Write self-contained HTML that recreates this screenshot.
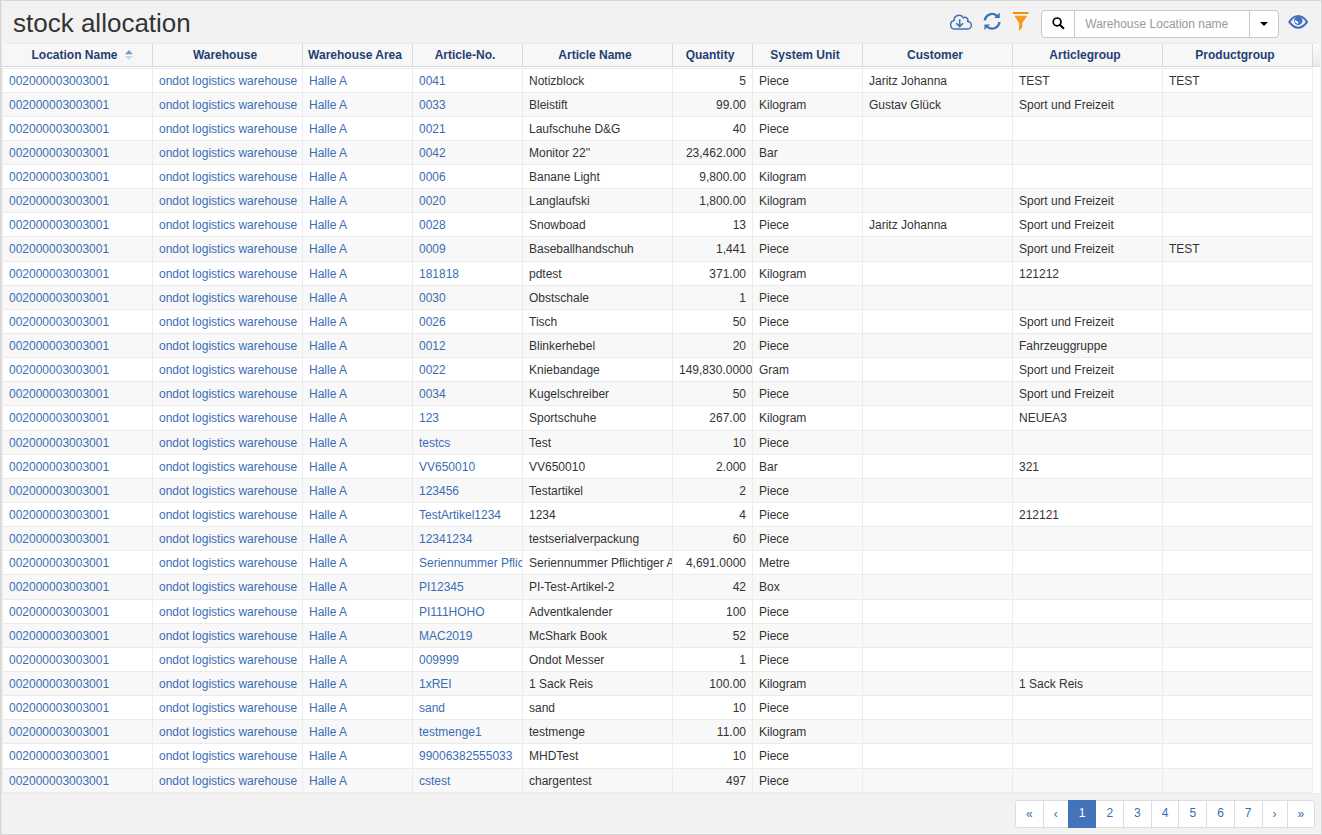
<!DOCTYPE html>
<html><head><meta charset="utf-8"><title>stock allocation</title>
<style>
*{box-sizing:border-box}
html,body{margin:0;padding:0}
body{width:1322px;height:835px;overflow:hidden;background:#f2f2f2;font-family:"Liberation Sans",sans-serif;font-size:12px;color:#333;position:relative}
.frame{position:absolute;left:0;top:0;width:1322px;height:835px;border:1px solid #d6d6d6;box-shadow:inset 1px 0 0 #e6e6e6,inset 0 1px 0 #f5f5f5,inset -1px 0 0 #f5f5f5,inset 0 -1px 0 #f5f5f5;pointer-events:none;z-index:5}
.title{position:absolute;left:13px;top:8px;font-size:26px;line-height:30px;color:#333;margin:0;font-weight:normal;white-space:nowrap}
.ico{position:absolute;display:block}
.ig{position:absolute;left:1041px;top:10px;width:238px;height:28px;border:1px solid #c9c9c9;border-radius:4px;background:#fff}
.ig .add{position:absolute;left:0;top:0;width:33px;height:26px;border-right:1px solid #c9c9c9}
.ig .ph{position:absolute;left:43.3px;top:5px;line-height:17px;color:#999;white-space:nowrap}
.ig .dd{position:absolute;left:207px;top:0;width:1px;height:26px;background:#c9c9c9}
.ig .caret{position:absolute;left:217.5px;top:11px;width:0;height:0;border-left:4px solid transparent;border-right:4px solid transparent;border-top:4px solid #000}
.thw{position:absolute;left:2px;top:43px;width:1319px;height:24px;background:#fff}
.thead{position:absolute;left:0;top:0;width:1319px;height:24px;background:#f7f7f7;border-top:1px solid #ebebeb;border-radius:5px 5px 0 0;overflow:hidden}
table{border-collapse:separate;border-spacing:0;table-layout:fixed}
th{font-weight:bold;color:#1f3f73;text-align:center;padding:3px 8px 2px 3px;line-height:17px;height:23px;border-right:1px solid #d6d9de;border-bottom:1px solid #d6d9de;white-space:nowrap;overflow:hidden;position:relative;background:#f7f7f7}
th.filler{border-right:0;background:linear-gradient(#fbfbfb,#e9e9e9);}
.sort{position:absolute;left:122.6px;top:6px;width:8px;height:10px}
.tbody{position:absolute;left:2px;top:67px;width:1319px;height:727px;background:#fff;border-bottom:1px solid #ededed}
.tbody table{position:absolute;left:0;top:1px}
td{padding:4px 6px 2px 6px;line-height:17px;height:24px;border-top:1px solid #ebebeb;border-left:1px solid #ececec;white-space:nowrap;overflow:hidden;color:#333}
tr.t25 td{padding-bottom:3px;height:25px}
tr:last-child td{border-bottom:1px solid #ebebeb}
td.x{border-right:1px solid #ececec}
td.l{color:#3a6db5}
td.r{text-align:right}
tr:nth-child(even) td{background:#f8f8f8}
.pag{position:absolute;left:1015px;top:800px;margin:0;padding:0;list-style:none;display:flex}
.pag li{display:block;margin-left:-1px;border:1px solid #dddddd;background:#fff;color:#3a6db5;padding:3px 10px 5px;line-height:18px;height:28px;font-size:12px;white-space:nowrap}
.pag li:first-child{margin-left:0;border-radius:3px 0 0 3px}
.pag li:last-child{border-radius:0 3px 3px 0}
.pag .g{position:relative;top:1px}
.pag li.act{background:#4373b8;border-color:#4373b8;color:#fff;position:relative;z-index:2}
</style></head><body>
<div class="frame"></div>
<h1 class="title">stock allocation</h1>

<!-- cloud download -->
<svg class="ico" style="left:945px;top:10px" width="30" height="24" viewBox="0 0 30 24">
<path d="M10.05 19.1 A4.35 4.35 0 0 1 9.1 10.5 A4.95 4.95 0 0 1 18.4 7.9 A2.745 2.745 0 0 1 22.5 11.4 A3.85 3.85 0 0 1 22.45 19.1 Z" fill="none" stroke="#3f72bd" stroke-width="1.5" stroke-linejoin="round"/>
<path d="M14.7 9.2 V16.6 M11.3 13.2 L14.7 16.6 L18.1 13.2" fill="none" stroke="#3f72bd" stroke-width="1.6"/>
</svg>
<!-- refresh -->
<svg class="ico" style="left:978px;top:8px" width="28" height="28" viewBox="0 0 28 28">
<path fill="#3f72bd" d="M5.6 12.6 A8.5 8.5 0 0 1 19.5 6.8 L21.8 4.7 L21.8 10.1 L16.1 10.1 L17.8 8.45 A6.1 6.1 0 0 0 8.0 12.6 Z M22.6 14.0 A8.5 8.5 0 0 1 8.7 19.8 L6.4 21.9 L6.4 16.5 L12.1 16.5 L10.4 18.15 A6.1 6.1 0 0 0 20.2 14.0 Z"/>
</svg>
<!-- filter -->
<svg class="ico" style="left:1008px;top:8px" width="28" height="28" viewBox="0 0 28 28">
<rect x="5" y="4" width="15.5" height="2" fill="#f0900f"/>
<path d="M6.4 7.8 H19.2 L14.3 15 V19.5 L11 23 V15 Z" fill="#f39c22"/>
</svg>

<div class="ig">
 <div class="add"><svg class="ico" style="left:9px;top:5px" width="14" height="14" viewBox="0 0 14 14"><circle cx="6.1" cy="5.9" r="3.9" fill="none" stroke="#000" stroke-width="1.7"/><path d="M8.8 8.7 L12.4 12.3" stroke="#000" stroke-width="2" stroke-linecap="round"/></svg></div>
 <div class="ph">Warehouse Location name</div>
 <div class="dd"></div>
 <div class="caret"></div>
</div>

<!-- eye -->
<svg class="ico" style="left:1286px;top:12px" width="24" height="20" viewBox="0 0 24 20">
<path d="M3.3 9.85 C6.3 5.6 9 3.95 12.2 3.95 C15.4 3.95 18.1 5.6 21.1 9.85 C18.1 14.1 15.4 15.75 12.2 15.75 C9 15.75 6.3 14.1 3.3 9.85 Z" fill="none" stroke="#3f72bd" stroke-width="2.1" stroke-linejoin="round"/>
<circle cx="12.3" cy="8.7" r="4.2" fill="#3f72bd"/>
<path d="M9.4 7.9 L12.8 10.6 L11.4 12.0 L8.8 9.8 Z" fill="#fff"/>
</svg>

<div class="thw"><div class="thead"><table style="width:1319px">
<colgroup><col style="width:151px"><col style="width:150px"><col style="width:110px"><col style="width:110px"><col style="width:150px"><col style="width:80px"><col style="width:110px"><col style="width:150px"><col style="width:150px"><col style="width:150px"><col style="width:8px"></colgroup>
<tr><th>Location Name<svg class="sort" viewBox="0 0 8 10"><path d="M0 4.2 L3.9 0 L7.8 4.2 Z" fill="#6b9ad2"/><path d="M0 5.9 L3.9 10 L7.8 5.9 Z" fill="#c3d7ee"/></svg></th><th>Warehouse</th><th>Warehouse Area</th><th>Article-No.</th><th>Article Name</th><th>Quantity</th><th>System Unit</th><th>Customer</th><th>Articlegroup</th><th>Productgroup</th><th class="filler"></th></tr>
</table></div></div>

<div class="tbody"><table style="width:1311px">
<colgroup><col style="width:150px"><col style="width:150px"><col style="width:110px"><col style="width:110px"><col style="width:150px"><col style="width:80px"><col style="width:110px"><col style="width:150px"><col style="width:150px"><col style="width:151px"></colgroup>
<tr><td class="l">002000003003001</td><td class="l">ondot logistics warehouse</td><td class="l">Halle A</td><td class="l">0041</td><td>Notizblock</td><td class="r">5</td><td>Piece</td><td>Jaritz Johanna</td><td>TEST</td><td class="x">TEST</td></tr>
<tr><td class="l">002000003003001</td><td class="l">ondot logistics warehouse</td><td class="l">Halle A</td><td class="l">0033</td><td>Bleistift</td><td class="r">99.00</td><td>Kilogram</td><td>Gustav Glück</td><td>Sport und Freizeit</td><td class="x"></td></tr>
<tr><td class="l">002000003003001</td><td class="l">ondot logistics warehouse</td><td class="l">Halle A</td><td class="l">0021</td><td>Laufschuhe D&amp;G</td><td class="r">40</td><td>Piece</td><td></td><td></td><td class="x"></td></tr>
<tr><td class="l">002000003003001</td><td class="l">ondot logistics warehouse</td><td class="l">Halle A</td><td class="l">0042</td><td>Monitor 22''</td><td class="r">23,462.000</td><td>Bar</td><td></td><td></td><td class="x"></td></tr>
<tr><td class="l">002000003003001</td><td class="l">ondot logistics warehouse</td><td class="l">Halle A</td><td class="l">0006</td><td>Banane Light</td><td class="r">9,800.00</td><td>Kilogram</td><td></td><td></td><td class="x"></td></tr>
<tr><td class="l">002000003003001</td><td class="l">ondot logistics warehouse</td><td class="l">Halle A</td><td class="l">0020</td><td>Langlaufski</td><td class="r">1,800.00</td><td>Kilogram</td><td></td><td>Sport und Freizeit</td><td class="x"></td></tr>
<tr><td class="l">002000003003001</td><td class="l">ondot logistics warehouse</td><td class="l">Halle A</td><td class="l">0028</td><td>Snowboad</td><td class="r">13</td><td>Piece</td><td>Jaritz Johanna</td><td>Sport und Freizeit</td><td class="x"></td></tr>
<tr class="t25"><td class="l">002000003003001</td><td class="l">ondot logistics warehouse</td><td class="l">Halle A</td><td class="l">0009</td><td>Baseballhandschuh</td><td class="r">1,441</td><td>Piece</td><td></td><td>Sport und Freizeit</td><td class="x">TEST</td></tr>
<tr><td class="l">002000003003001</td><td class="l">ondot logistics warehouse</td><td class="l">Halle A</td><td class="l">181818</td><td>pdtest</td><td class="r">371.00</td><td>Kilogram</td><td></td><td>121212</td><td class="x"></td></tr>
<tr><td class="l">002000003003001</td><td class="l">ondot logistics warehouse</td><td class="l">Halle A</td><td class="l">0030</td><td>Obstschale</td><td class="r">1</td><td>Piece</td><td></td><td></td><td class="x"></td></tr>
<tr><td class="l">002000003003001</td><td class="l">ondot logistics warehouse</td><td class="l">Halle A</td><td class="l">0026</td><td>Tisch</td><td class="r">50</td><td>Piece</td><td></td><td>Sport und Freizeit</td><td class="x"></td></tr>
<tr><td class="l">002000003003001</td><td class="l">ondot logistics warehouse</td><td class="l">Halle A</td><td class="l">0012</td><td>Blinkerhebel</td><td class="r">20</td><td>Piece</td><td></td><td>Fahrzeuggruppe</td><td class="x"></td></tr>
<tr><td class="l">002000003003001</td><td class="l">ondot logistics warehouse</td><td class="l">Halle A</td><td class="l">0022</td><td>Kniebandage</td><td class="r">149,830.0000</td><td>Gram</td><td></td><td>Sport und Freizeit</td><td class="x"></td></tr>
<tr><td class="l">002000003003001</td><td class="l">ondot logistics warehouse</td><td class="l">Halle A</td><td class="l">0034</td><td>Kugelschreiber</td><td class="r">50</td><td>Piece</td><td></td><td>Sport und Freizeit</td><td class="x"></td></tr>
<tr class="t25"><td class="l">002000003003001</td><td class="l">ondot logistics warehouse</td><td class="l">Halle A</td><td class="l">123</td><td>Sportschuhe</td><td class="r">267.00</td><td>Kilogram</td><td></td><td>NEUEA3</td><td class="x"></td></tr>
<tr><td class="l">002000003003001</td><td class="l">ondot logistics warehouse</td><td class="l">Halle A</td><td class="l">testcs</td><td>Test</td><td class="r">10</td><td>Piece</td><td></td><td></td><td class="x"></td></tr>
<tr><td class="l">002000003003001</td><td class="l">ondot logistics warehouse</td><td class="l">Halle A</td><td class="l">VV650010</td><td>VV650010</td><td class="r">2.000</td><td>Bar</td><td></td><td>321</td><td class="x"></td></tr>
<tr><td class="l">002000003003001</td><td class="l">ondot logistics warehouse</td><td class="l">Halle A</td><td class="l">123456</td><td>Testartikel</td><td class="r">2</td><td>Piece</td><td></td><td></td><td class="x"></td></tr>
<tr><td class="l">002000003003001</td><td class="l">ondot logistics warehouse</td><td class="l">Halle A</td><td class="l">TestArtikel1234</td><td>1234</td><td class="r">4</td><td>Piece</td><td></td><td>212121</td><td class="x"></td></tr>
<tr><td class="l">002000003003001</td><td class="l">ondot logistics warehouse</td><td class="l">Halle A</td><td class="l">12341234</td><td>testserialverpackung</td><td class="r">60</td><td>Piece</td><td></td><td></td><td class="x"></td></tr>
<tr><td class="l">002000003003001</td><td class="l">ondot logistics warehouse</td><td class="l">Halle A</td><td class="l">Seriennummer Pflichtiger Artikel</td><td>Seriennummer Pflichtiger Artikel</td><td class="r">4,691.0000</td><td>Metre</td><td></td><td></td><td class="x"></td></tr>
<tr class="t25"><td class="l">002000003003001</td><td class="l">ondot logistics warehouse</td><td class="l">Halle A</td><td class="l">PI12345</td><td>PI-Test-Artikel-2</td><td class="r">42</td><td>Box</td><td></td><td></td><td class="x"></td></tr>
<tr><td class="l">002000003003001</td><td class="l">ondot logistics warehouse</td><td class="l">Halle A</td><td class="l">PI111HOHO</td><td>Adventkalender</td><td class="r">100</td><td>Piece</td><td></td><td></td><td class="x"></td></tr>
<tr><td class="l">002000003003001</td><td class="l">ondot logistics warehouse</td><td class="l">Halle A</td><td class="l">MAC2019</td><td>McShark Book</td><td class="r">52</td><td>Piece</td><td></td><td></td><td class="x"></td></tr>
<tr><td class="l">002000003003001</td><td class="l">ondot logistics warehouse</td><td class="l">Halle A</td><td class="l">009999</td><td>Ondot Messer</td><td class="r">1</td><td>Piece</td><td></td><td></td><td class="x"></td></tr>
<tr><td class="l">002000003003001</td><td class="l">ondot logistics warehouse</td><td class="l">Halle A</td><td class="l">1xREI</td><td>1 Sack Reis</td><td class="r">100.00</td><td>Kilogram</td><td></td><td>1 Sack Reis</td><td class="x"></td></tr>
<tr><td class="l">002000003003001</td><td class="l">ondot logistics warehouse</td><td class="l">Halle A</td><td class="l">sand</td><td>sand</td><td class="r">10</td><td>Piece</td><td></td><td></td><td class="x"></td></tr>
<tr><td class="l">002000003003001</td><td class="l">ondot logistics warehouse</td><td class="l">Halle A</td><td class="l">testmenge1</td><td>testmenge</td><td class="r">11.00</td><td>Kilogram</td><td></td><td></td><td class="x"></td></tr>
<tr class="t25"><td class="l">002000003003001</td><td class="l">ondot logistics warehouse</td><td class="l">Halle A</td><td class="l">99006382555033</td><td>MHDTest</td><td class="r">10</td><td>Piece</td><td></td><td></td><td class="x"></td></tr>
<tr><td class="l">002000003003001</td><td class="l">ondot logistics warehouse</td><td class="l">Halle A</td><td class="l">cstest</td><td>chargentest</td><td class="r">497</td><td>Piece</td><td></td><td></td><td class="x"></td></tr>
</table></div>

<ul class="pag"><li><span class="g">&laquo;</span></li><li><span class="g">&lsaquo;</span></li><li class="act">1</li><li>2</li><li>3</li><li>4</li><li>5</li><li>6</li><li>7</li><li><span class="g">&rsaquo;</span></li><li><span class="g">&raquo;</span></li></ul>
</body></html>
